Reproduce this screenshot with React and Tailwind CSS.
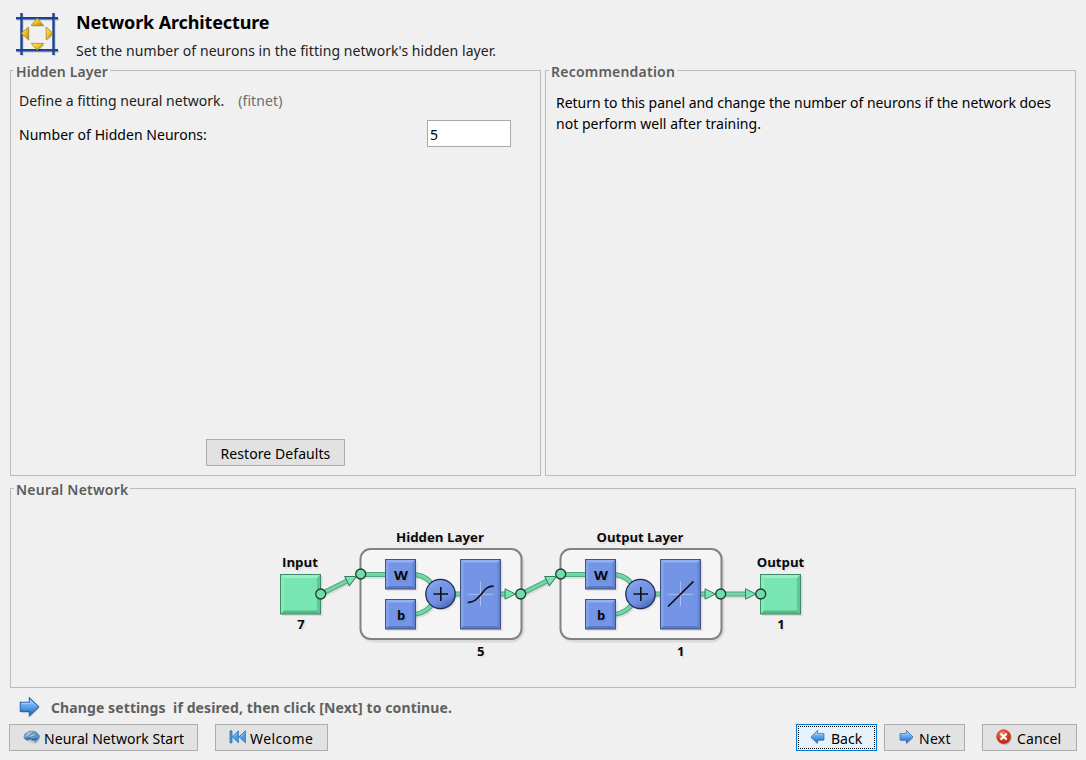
import React from "react";

function Panel({ title, titleClass, className, children }) {
  return (
    <section className={"flex flex-col border border-[#bcbcbc] " + className}>
      <h2 className={"-mt-[10px] ml-[3px] h-[22px] w-fit whitespace-nowrap bg-[#f0f0f0] px-[2px] text-[14px] font-semibold leading-[22px] text-[#5c5c5c] " + titleClass}>
        {title}
      </h2>
      {children}
    </section>
  );
}

function Button({ className, children }) {
  return (
    <button className={"flex h-[27px] items-center whitespace-nowrap border text-[14px] leading-[20px] text-black " + className}>
      {children}
    </button>
  );
}

function ArrowIcon({ className, flip }) {
  return (
    <svg viewBox="0 0 20 20" className={className}>
      <defs>
        <linearGradient id="arrowBlue" x1="0" y1="0" x2="0" y2="1">
          <stop offset="0" stopColor="#a6d4fb" />
          <stop offset="0.5" stopColor="#5aa3ec" />
          <stop offset="1" stopColor="#1d60c4" />
        </linearGradient>
      </defs>
      <g transform={flip ? "translate(20 0) scale(-1 1)" : undefined}>
        <path d="M1.5 6.8H10.5V2.4L19.8 11L10.5 20V15.8H1.5Z" fill="#00000038" transform="translate(0.2 0)" />
        <path d="M0.8 5.2H9.8V0.7L19.2 9.8L9.8 18.9V14.4H0.8Z" fill="url(#arrowBlue)" stroke="#2a66ae" strokeWidth="1.1" />
        <path d="M2 6.4H11V3.4L17 9.4" fill="none" stroke="#b9defd" strokeWidth="0.7" />
      </g>
    </svg>
  );
}

function HeaderIcon() {
  return (
    <svg viewBox="0 0 46 46" className="ml-[15px] mt-[12px] h-[46px] w-[46px] shrink-0">
      <defs>
        <linearGradient id="gold" x1="0" y1="0" x2="1" y2="1">
          <stop offset="0" stopColor="#fff07a" />
          <stop offset="0.5" stopColor="#f2c21c" />
          <stop offset="1" stopColor="#b98209" />
        </linearGradient>
      </defs>
      <path d="M2 7.5H44M2 39.5H44M7.5 2V44M39.5 2V44" stroke="#00000026" strokeWidth="2.4" />
      <path d="M1 6.2H43M1 38.3H43M6.5 1V43M38.5 1V43" stroke="#1d4294" strokeWidth="2.4" />
      <g transform="translate(1 1)" fill="#00000030">
        <path d="M22.2 6.2L28.6 13.4H16.2Z" />
        <path d="M22.2 38.2L28.6 31.4H16.2Z" />
        <path d="M6.4 21.2L13.4 15V27.8Z" />
        <path d="M37.8 21.2L31.2 15V27.8Z" />
      </g>
      <g fill="url(#gold)" stroke="#a8801e" strokeWidth="0.8" strokeLinejoin="round">
        <path d="M22.2 6.2L28.6 13.4H16.2Z" />
        <path d="M22.2 38.2L28.6 31.4H16.2Z" />
        <path d="M6.4 21.2L13.4 15V27.8Z" />
        <path d="M37.8 21.2L31.2 15V27.8Z" />
      </g>
    </svg>
  );
}

function BrainIcon() {
  return (
    <svg viewBox="0 0 18 14" className="-mt-[2px] h-[14px] w-[18px] shrink-0">
      <path d="M3 11L12 12.5L17 9L15 12.8L10 13.6Z" fill="#00000022" />
      <path d="M1 7.6C0.6 5 2.4 3.2 4.2 2.8C5.6 1.2 8.2 1 9.8 1.4C12.4 1.2 14.4 2.6 15 4.2C16.8 5 17 7.4 15.8 8.6C15.4 10.2 13.8 10.8 12.8 10.6L12.6 12.6L10.6 10.8C9 11.2 7.8 10.4 7.4 9.8C5 10.8 1.6 10.2 1 7.6Z" fill="#5f93c0" stroke="#5a7fa3" strokeWidth="0.7" />
      <path d="M2.2 6.6C3.4 4.4 6 5 7.2 3.4M6.8 7C8 4.8 10.4 6 11.6 3.8M4 3.8C6 2.2 8 2.4 9.4 2.4" fill="none" stroke="#a9cce6" strokeWidth="1.2" />
      <path d="M3 8.6C5 9 7 8.4 8 7.8M9 9.4C11 9.6 13 9.2 14.4 8.2" fill="none" stroke="#2c5c92" strokeWidth="1.1" />
    </svg>
  );
}

function RewindIcon() {
  return (
    <svg viewBox="0 0 18 14" className="-mt-[2px] h-[14px] w-[18px] shrink-0">
      <g fill="#4f9be2" stroke="#2d6fb2" strokeWidth="0.8">
        <path d="M1 0.8H3V12.8H1Z" />
        <path d="M9.4 0.8V12.8L3.4 6.8Z" />
        <path d="M16.4 0.8V12.8L10 6.8Z" />
      </g>
      <path d="M8.4 3.2L4.8 6.7M15.4 3.2L11.6 6.7" stroke="#add8fa" strokeWidth="0.9" />
    </svg>
  );
}

function CancelIcon() {
  return (
    <svg viewBox="0 0 16 16" className="-mt-[2px] h-[16px] w-[16px] shrink-0">
      <defs>
        <radialGradient id="red" cx="0.4" cy="0.3" r="0.7">
          <stop offset="0" stopColor="#f58a70" />
          <stop offset="0.6" stopColor="#de3d22" />
          <stop offset="1" stopColor="#b82412" />
        </radialGradient>
      </defs>
      <circle cx="8.6" cy="8.8" r="7" fill="#00000040" />
      <circle cx="7.6" cy="7.6" r="6.9" fill="url(#red)" stroke="#b5331f" strokeWidth="0.7" />
      <path d="M5.2 5.2L10 10M10 5.2L5.2 10" stroke="#fff" strokeWidth="2.2" strokeLinecap="round" />
    </svg>
  );
}

const BLUE = { fill: "#7495e6", light: "#94b0f3", left: "#86a4ee", dark: "#5a78c8", right: "#6583d4", stroke: "#43537f" };
const GREEN = { fill: "#79e5b1", light: "#98f0c6", left: "#8aeabc", dark: "#55bb8d", right: "#60c697", stroke: "#3a8c68" };

function Bevel({ x, y, w, h, c, d = 3 }) {
  const r = x + w;
  const b = y + h;
  return (
    <g>
      <rect x={x + 1.5} y={y + 1.5} width={w + 0.5} height={h + 0.5} fill="#00000018" />
      <rect x={x} y={y} width={w} height={h} fill={c.fill} />
      <path d={`M${x} ${y}H${r}L${r - d} ${y + d}H${x + d}Z`} fill={c.light} />
      <path d={`M${x} ${y}V${b}L${x + d} ${b - d}V${y + d}Z`} fill={c.left} />
      <path d={`M${x} ${b}H${r}L${r - d} ${b - d}H${x + d}Z`} fill={c.dark} />
      <path d={`M${r} ${y}V${b}L${r - d} ${b - d}V${y + d}Z`} fill={c.right} />
      <rect x={x} y={y} width={w} height={h} fill="none" stroke={c.stroke} strokeWidth="1" />
    </g>
  );
}

function Wire({ d }) {
  return (
    <g fill="none">
      <path d={d} stroke="#00000014" strokeWidth="5" transform="translate(1 2)" />
      <path d={d} stroke="#4fa981" strokeWidth="5" />
      <path d={d} stroke="#72d6a7" strokeWidth="3" />
    </g>
  );
}

function Node({ x, y }) {
  return <circle cx={x} cy={y} r="5" fill="#70dda9" stroke="#1d3c2e" strokeWidth="1.3" />;
}

function Head({ x, y, angle = 0 }) {
  return (
    <path
      d="M0 0L-10.5 -5.2V5.2Z"
      transform={`translate(${x} ${y}) rotate(${angle})`}
      fill="#7be3b2"
      stroke="#35805f"
      strokeWidth="1"
    />
  );
}

function Label({ x, y, w, children, size = 13 }) {
  const fit = w ? { textLength: w, lengthAdjust: "spacingAndGlyphs" } : {};
  return (
    <g fontSize={size} fontWeight="700" textAnchor="middle">
      <text x={x + 1.5} y={y + 1.5} fill="#00000016" aria-hidden="true" {...fit}>{children}</text>
      <text x={x} y={y} fill="#080808" {...fit}>{children}</text>
    </g>
  );
}

function Layer({ x, title, titleWidth, size, curve }) {
  return (
    <g>
      <rect x={x + 2} y="551" width="161" height="90" rx="11" fill="none" stroke="#00000016" strokeWidth="3" />
      <rect x={x + 0.5} y="549" width="161" height="90" rx="10" fill="#f5f5f5" stroke="#828282" strokeWidth="2" />
      <Wire d={`M${x} 574.5H${x + 26}`} />
      <Wire d={`M${x + 54} 574.5C${x + 64} 575 ${x + 69} 580 ${x + 74} 586`} />
      <Wire d={`M${x + 54} 614.5C${x + 64} 613 ${x + 69} 609 ${x + 74} 602`} />
      <Wire d={`M${x + 90} 594H${x + 102}`} />
      <Wire d={`M${x + 140} 594H${x + 148}`} />
      <Bevel x={x + 25.5} y={559.5} w={30} h={29.5} c={BLUE} />
      <Bevel x={x + 25.5} y={599.5} w={30} h={29.5} c={BLUE} />
      <circle cx={x + 82} cy="596" r="14.6" fill="#0000001c" />
      <circle cx={x + 80.5} cy="594" r="14.7" fill="url(#sumFill)" stroke="#1d2a4e" strokeWidth="1.3" />
      <path d={`M${x + 73.5} 594H${x + 88}M${x + 80.8} 587V601`} stroke="#111" strokeWidth="1.6" />
      <Bevel x={x + 100.5} y={559.5} w={40} h={69.5} c={BLUE} />
      <path d={`M${x + 108} 594.3H${x + 133}M${x + 120.5} 581.5V606`} stroke="#aabef1" strokeWidth="1" />
      <path d={curve} fill="none" stroke="#10131c" strokeWidth="1.7" strokeLinecap="round" />
      <Label x={x + 41} y={580} w={14}>W</Label>
      <Label x={x + 41} y={620}>b</Label>
      <Head x={x + 155.5} y={594} />
      <Label x={x + 80} y={542} w={titleWidth}>{title}</Label>
      <Label x={x + 120.8} y={656}>{size}</Label>
    </g>
  );
}

function NetworkDiagram() {
  return (
    <svg viewBox="270 520 550 150" className="ml-[259px] mt-[19px] h-[150px] w-[550px] shrink-0 [font-family:'Open_Sans','Noto_Sans',sans-serif]">
      <defs>
        <linearGradient id="sumFill" x1="0" y1="0" x2="0.6" y2="1">
          <stop offset="0" stopColor="#9db7f6" />
          <stop offset="0.35" stopColor="#7898e8" />
          <stop offset="0.75" stopColor="#6f90e2" />
          <stop offset="1" stopColor="#4d6cbf" />
        </linearGradient>
      </defs>
      <Layer x={360} title="Hidden Layer" titleWidth={88} size="5" curve="M468.5 602.4C474 602.4 477 599 481 594.5C485 589.5 487 586.2 493 586.2" />
      <Layer x={560} title="Output Layer" titleWidth={87} size="1" curve="M668.5 606L693 581.8" />
      <Bevel x={280.5} y={574.5} w={40} h={39.5} c={GREEN} d={3.5} />
      <Bevel x={760.5} y={574.5} w={40} h={39.5} c={GREEN} d={3.5} />
      <Wire d="M321 594L349 580" />
      <Head x={356.5} y={576.5} angle={-26} />
      <Wire d="M521 594L549 580" />
      <Head x={556.5} y={576.5} angle={-26} />
      <Wire d="M721 594H748" />
      <Head x={756} y={594} />
      <Node x={320.7} y={594} />
      <Node x={360.7} y={574} />
      <Node x={520.7} y={594} />
      <Node x={560.7} y={574} />
      <Node x={720.7} y={594} />
      <Node x={760.7} y={594} />
      <Label x={300} y={567} w={36}>Input</Label>
      <Label x={301} y={629}>7</Label>
      <Label x={780.5} y={567} w={47.5}>Output</Label>
      <Label x={781} y={629}>1</Label>
    </svg>
  );
}

export default function App() {
  return (
    <main className="flex h-[760px] w-[1086px] flex-col overflow-hidden bg-[#f0f0f0] text-black [font-family:'Noto_Sans','Open_Sans',sans-serif]">
      <header className="flex h-[70px] shrink-0">
        <HeaderIcon />
        <div className="ml-[15px] flex flex-col whitespace-nowrap pt-[10px]">
          <h1 className="text-[18px] font-bold leading-[24px] tracking-[-0.13px]">Network Architecture</h1>
          <p className="mt-[7px] text-[14px] leading-[20px] tracking-[0.065px] text-[#222]">Set the number of neurons in the fitting network's hidden layer.</p>
        </div>
      </header>

      <div className="flex h-[406px] shrink-0 gap-[4px] pl-[10px]">
        <Panel title="Hidden Layer" titleClass="tracking-[0.12px]" className="w-[531px]">
          <div className="flex flex-1 flex-col pl-[8px]">
            <p className="mt-[6px] flex h-[22px] items-center whitespace-nowrap text-[14px] text-[#222]">
              Define a fitting neural network.
              <span className="ml-[14px] tracking-[0.1px] text-[#6c6c6c]">(fitnet)</span>
            </p>
            <div className="mt-[9px] flex h-[27px] items-center">
              <label className="w-[408px] pt-px text-[14px] tracking-[0.04px]">Number of Hidden Neurons:</label>
              <input readOnly value="5" className="h-[27px] w-[84px] border border-[#a8a8a8] bg-white pl-[2px] pt-px text-[14px] outline-none" />
            </div>
            <div className="mb-[9px] mt-auto pl-[187px]">
              <Button className="w-[139px] justify-center border-[#adadad] bg-[#e2e2e2] pt-[3px] tracking-[0.07px]">Restore Defaults</Button>
            </div>
          </div>
        </Panel>
        <Panel title="Recommendation" titleClass="tracking-[0.22px]" className="w-[531px]">
          <p className="mt-[9px] whitespace-nowrap pl-[10px] text-[14px] leading-[21px] tracking-[-0.04px]">
            Return to this panel and change the number of neurons if the network does
            <br />
            <span className="tracking-[0.03px]">not perform well after training.</span>
          </p>
        </Panel>
      </div>

      <div className="mt-[12px] flex h-[200px] shrink-0 pl-[10px]">
        <Panel title="Neural Network" titleClass="tracking-[0.22px]" className="w-[1066px]">
          <NetworkDiagram />
        </Panel>
      </div>

      <div className="flex h-[36px] shrink-0 items-center pl-[19px] pt-[3px]">
        <ArrowIcon className="-mt-[2px] h-[20px] w-[21px]" />
        <p className="ml-[11px] whitespace-pre text-[14px] font-bold tracking-[0.1px] text-[#606060]">{"Change settings  if desired, then click [Next] to continue."}</p>
      </div>

      <footer className="flex h-[27px] shrink-0 pl-[9px]">
        <Button className="w-[189px] border-[#adadad] bg-[#e2e2e2] pl-[13px]">
          <BrainIcon />
          <span className="ml-[3px] pt-[3px] tracking-[0.05px]">Neural Network Start</span>
        </Button>
        <Button className="ml-[17px] w-[113px] border-[#adadad] bg-[#e2e2e2] pl-[13px]">
          <RewindIcon />
          <span className="ml-[3px] pt-[3px] tracking-[0.4px]">Welcome</span>
        </Button>
        <Button className="ml-auto w-[81px] border-[#0078d7] bg-[#e5f1fb] p-px">
          <span className="flex h-[23px] w-full items-center border border-dotted border-black pl-[11px]">
            <ArrowIcon flip className="-mt-[2px] h-[14px] w-[15px]" />
            <span className="ml-[6px] pt-[3px]">Back</span>
          </span>
        </Button>
        <Button className="ml-[7px] w-[81px] border-[#adadad] bg-[#e2e2e2] pl-[14px]">
          <ArrowIcon className="-mt-[2px] h-[14px] w-[15px]" />
          <span className="ml-[5px] pt-[3px] tracking-[0.3px]">Next</span>
        </Button>
        <Button className="ml-[17px] mr-[9px] w-[95px] border-[#adadad] bg-[#e2e2e2] pl-[13px]">
          <CancelIcon />
          <span className="ml-[5px] pt-[3px] tracking-[0.1px]">Cancel</span>
        </Button>
      </footer>
    </main>
  );
}
